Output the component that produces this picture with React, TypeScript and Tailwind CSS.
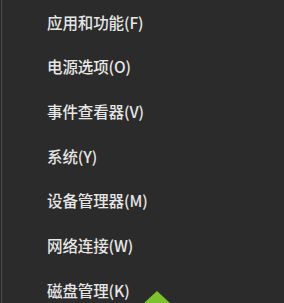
import React from "react";

const items = [
  "应用和功能(F)",
  "电源选项(O)",
  "事件查看器(V)",
  "系统(Y)",
  "设备管理器(M)",
  "网络连接(W)",
  "磁盘管理(K)",
];

export default function App() {
  return (
    <div className="relative w-[284px] h-[303px] overflow-hidden bg-[#2b2b2b] flex">
      <div className="w-px shrink-0 bg-[#262626]" />
      <div className="w-px shrink-0 bg-[#4e4e4e]" />
      <div
        className="flex flex-col pl-[45px] shrink-0"
        style={{ fontFamily: '"Noto Sans CJK SC", "Microsoft YaHei", sans-serif' }}
      >
        {items.map((t) => (
          <div key={t} className="h-[44.67px] shrink-0 flex items-center text-[15.5px] font-medium text-[#e6e6e6] tracking-[-0.1px]">
            {t}
          </div>
        ))}
      </div>
      <svg className="absolute left-[143px] top-[290px]" width="30" height="14" viewBox="0 0 30 14">
        <polygon points="14,1 28,14 0,14" fill="#7cc22c" />
      </svg>
    </div>
  );
}
